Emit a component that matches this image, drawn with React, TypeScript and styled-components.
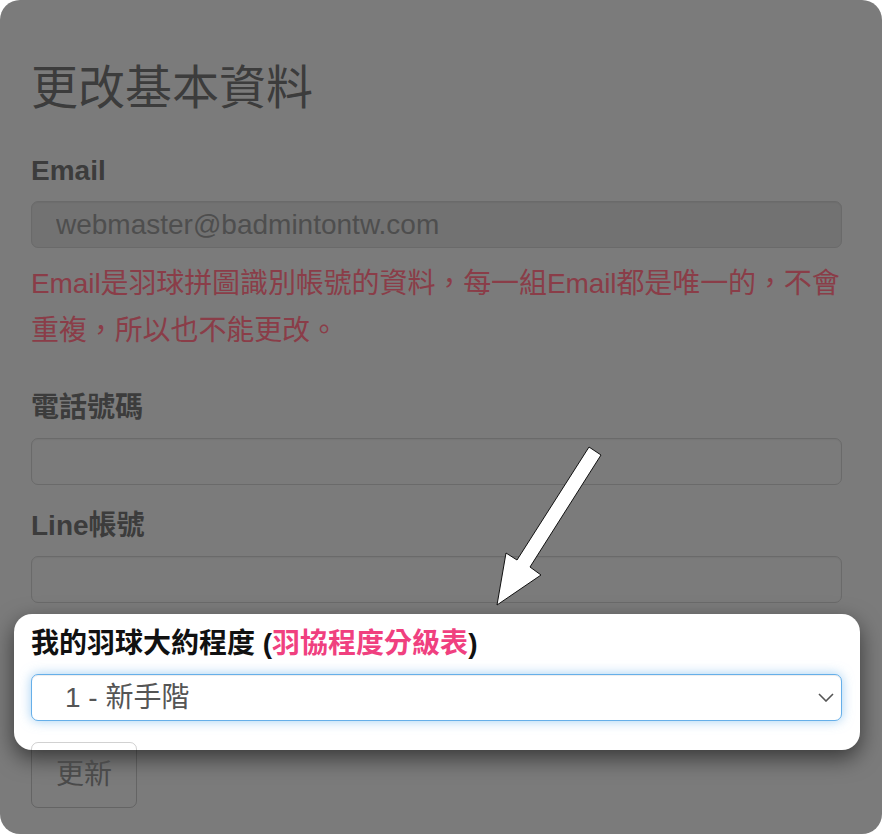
import React from "react";
import styled, { createGlobalStyle } from "styled-components";

const GlobalStyle = createGlobalStyle`
  html, body { margin: 0; padding: 0; background: #ffffff; }
  * { box-sizing: border-box; }
  body { font-family: "Liberation Sans", "Noto Sans CJK TC", sans-serif; }
`;

const Card = styled.div`
  position: relative;
  width: 882px;
  min-height: 834px;
  background: #7b7b7b;
  border-radius: 20px;
  padding: 59px 40px 0 31px;
  overflow: hidden;
`;

const Title = styled.h1`
  margin: 0 0 34px;
  font-family: "Liberation Sans", "Noto Sans CJK TC", sans-serif;
  font-size: 47px;
  line-height: 58px;
  font-weight: 400;
  color: #3c3c3c;
`;

const FormGroup = styled.div<{ $spotlight?: boolean }>`
  position: relative;
  margin-bottom: 21px;
  ${(p) =>
    p.$spotlight &&
    `
    z-index: 1;
    &::before {
      content: "";
      position: absolute;
      top: -10px;
      left: -17px;
      right: -18px;
      bottom: -29px;
      background: #ffffff;
      border-radius: 18px;
      box-shadow: 0 8px 22px rgba(0, 0, 0, 0.55);
      z-index: -1;
    }
  `}
`;

const Label = styled.label<{ $light?: boolean }>`
  display: block;
  margin-bottom: 10px;
  font-size: 28px;
  line-height: 40px;
  font-weight: 700;
  color: ${(p) => (p.$light ? "#111111" : "#3c3c3c")};
`;

const LinkText = styled.a`
  color: #f0407f;
  text-decoration: none;
`;

const Input = styled.input`
  display: block;
  width: 100%;
  height: 47px;
  padding: 0 24px;
  font-family: "Liberation Sans", "Noto Sans CJK TC", sans-serif;
  font-size: 28px;
  color: #4e4e4e;
  background: ${(p) => (p.disabled ? "#727272" : "transparent")};
  border: 1px solid #6a6a6a;
  border-radius: 7px;
  box-shadow: inset 0 1px 1px rgba(0, 0, 0, 0.04);
  outline: none;
`;

const HelpText = styled.p`
  margin: 12px 0 34px;
  font-size: 28px;
  line-height: 47px;
  letter-spacing: -0.1px;
  color: #8a3d48;
`;

const SelectWrap = styled.div`
  position: relative;
`;

const Select = styled.select`
  display: block;
  width: 100%;
  height: 47px;
  padding: 0 40px 0 33px;
  appearance: none;
  -webkit-appearance: none;
  font-family: "Liberation Sans", "Noto Sans CJK TC", sans-serif;
  font-size: 28px;
  color: #555555;
  background: #ffffff;
  border: 1.5px solid #66afe9;
  border-radius: 7px;
  box-shadow: inset 0 1px 1px rgba(0, 0, 0, 0.075), 0 0 12px rgba(102, 175, 233, 0.6);
  outline: none;
`;

const Chevron = styled.svg`
  position: absolute;
  right: 8px;
  top: 19px;
  width: 16px;
  height: 9px;
  pointer-events: none;
`;

const Button = styled.button`
  position: relative;
  z-index: 2;
  display: inline-block;
  padding: 12px 24px;
  font-family: "Liberation Sans", "Noto Sans CJK TC", sans-serif;
  font-size: 28px;
  line-height: 40px;
  color: #4a4a4a;
  background: transparent;
  border: 1px solid rgba(0, 0, 0, 0.18);
  border-radius: 7px;
`;

const Arrow = styled.svg`
  position: absolute;
  left: 490px;
  top: 440px;
  width: 120px;
  height: 172px;
  z-index: 3;
`;

export default function App() {
  return (
    <>
      <GlobalStyle />
      <Card>
        <Title>更改基本資料</Title>

        <FormGroup>
          <Label>Email</Label>
          <Input disabled defaultValue="webmaster@badmintontw.com" />
          <HelpText>
            Email是羽球拼圖識別帳號的資料，每一組Email都是唯一的，不會重複，所以也不能更改。
          </HelpText>
        </FormGroup>

        <FormGroup>
          <Label>電話號碼</Label>
          <Input />
        </FormGroup>

        <FormGroup>
          <Label>Line帳號</Label>
          <Input />
        </FormGroup>

        <FormGroup $spotlight>
          <Label $light>
            我的羽球大約程度 (<LinkText>羽協程度分級表</LinkText>)
          </Label>
          <SelectWrap>
            <Select defaultValue="1">
              <option value="1">1 - 新手階</option>
            </Select>
            <Chevron viewBox="0 0 16 9">
              <path d="M1 1 L8 8 L15 1" fill="none" stroke="#555" strokeWidth="1.6" />
            </Chevron>
          </SelectWrap>
        </FormGroup>

        <Button>更新</Button>

        <Arrow viewBox="0 0 120 172">
          <polygon
            points="7,165 16,113 27,120 99,7 111,15 40,127 51,135"
            fill="#ffffff"
            stroke="#111111"
            strokeWidth="1"
            strokeLinejoin="miter"
          />
        </Arrow>
      </Card>
    </>
  );
}
